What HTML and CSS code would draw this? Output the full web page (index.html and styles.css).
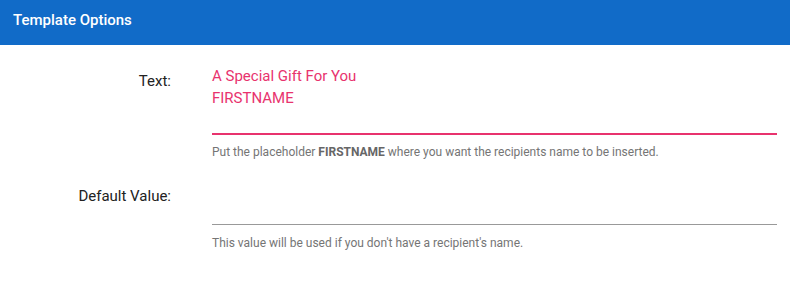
FILE: index.html
```html
<!DOCTYPE html>
<html lang="en">
    <head>
        <meta charset="UTF-8" />
        <meta name="viewport" content="width=device-width, initial-scale=1.0" />
        <title>Template Options</title>
        <link rel="stylesheet" href="styles.css">
    </head>
    <body>
        <div class="panel">
            <div class="panel-header">Template Options</div>
            <div class="panel-body">
                <div class="row">
                    <div class="label">Text:</div>
                    <div class="field">
                        <div class="input focused">A Special Gift For You<br>FIRSTNAME</div>
                        <p class="hint">Put the placeholder <b>FIRSTNAME</b> where you want the recipients name to be inserted.</p>
                    </div>
                </div>
                <div class="row">
                    <div class="label">Default Value:</div>
                    <div class="field">
                        <div class="input"></div>
                        <p class="hint">This value will be used if you don't have a recipient's name.</p>
                    </div>
                </div>
            </div>
        </div>
    </body>
</html>
```

FILE: styles.css
```css
* {
    margin: 0;
    padding: 0;
    box-sizing: border-box;
}
body {
    font-family: Roboto, "Liberation Sans", sans-serif;
    background: #fff;
}
.panel-header {
    height: 45px;
    padding: 0 13px;
    background-color: #116bc8;
    color: #fff;
    font-size: 15px;
    font-weight: 500;
    line-height: 40px;
}
.panel-body {
    padding: 20px 13px 0;
}
.row {
    display: grid;
    grid-template-columns: 158px 1fr;
    column-gap: 41px;
    margin-bottom: 21px;
}
.label {
    text-align: right;
    font-size: 15px;
    color: #222;
    padding-top: 7px;
}
.input {
    min-height: 70px;
    font-size: 15px;
    line-height: 22px;
    color: #e8336e;
    border-bottom: 1px solid #999;
}
.input.focused {
    border-bottom: 2px solid #e8336e;
}
.row + .row .input {
    min-height: 45px;
}
.hint {
    margin-top: 10px;
    font-size: 12px;
    color: #757575;
}
.row + .row .hint {
    margin-top: 11px;
}
.hint b {
    font-weight: 700;
    color: #666;
}
```
